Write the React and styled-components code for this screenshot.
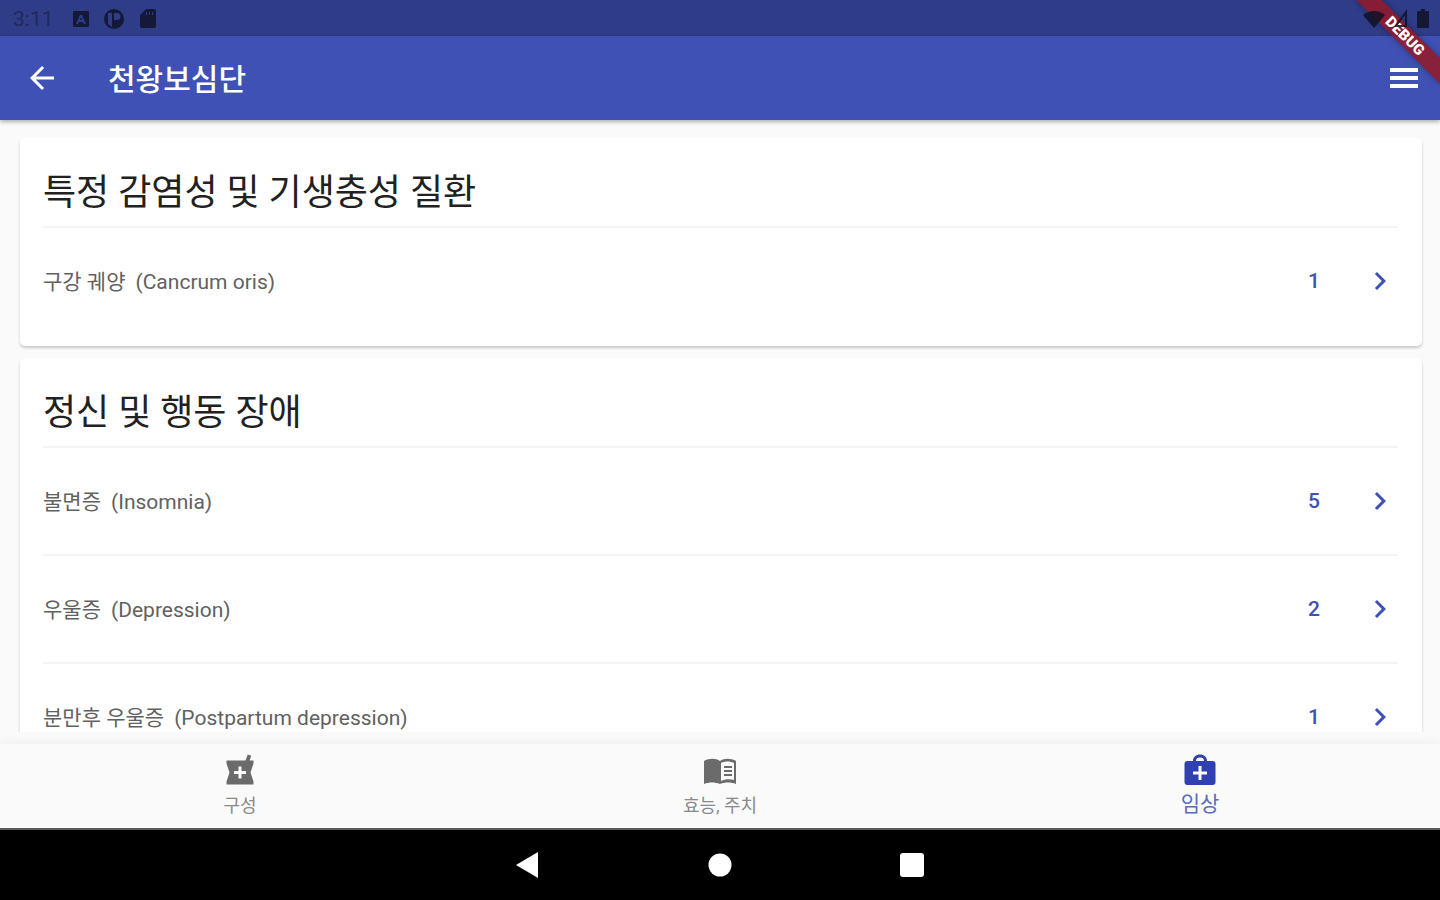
import React, { useState } from 'react';
import styled, { createGlobalStyle } from 'styled-components';
import { MdArrowBack, MdChevronRight, MdLocalPharmacy } from 'react-icons/md';

const sections = [
  {
    title: '특정 감염성 및 기생충성 질환',
    items: [{ name: '구강 궤양', english: 'Cancrum oris', count: 1 }],
  },
  {
    title: '정신 및 행동 장애',
    items: [
      { name: '불면증', english: 'Insomnia', count: 5 },
      { name: '우울증', english: 'Depression', count: 2 },
      { name: '분만후 우울증', english: 'Postpartum depression', count: 1 },
    ],
  },
];

const BookIcon = ({ size }) => (
  <svg width={size} height={size} viewBox="0 0 36 36" fill="currentColor" aria-hidden="true">
    <path
      fillRule="evenodd"
      d="M2 8c5-3 12-3 16 0 4-3 11-3 16 0v23c-5-2-11-2-16 0-5-2-11-2-16 0zm17 2v18c4-2 9-2 13-1V10c-4-2-9-2-13 0z"
    />
    <path d="M22 13h8v2h-8zm0 4h8v2h-8zm0 4h8v2h-8z" />
  </svg>
);

const MedkitIcon = ({ size }) => (
  <svg width={size} height={size} viewBox="0 0 36 36" fill="currentColor" aria-hidden="true">
    <path
      fillRule="evenodd"
      d="M11 8c0-4 3-6.500 7-6.500s7 2.500 7 6.500h5.500a3 3 0 0 1 3 3v18a3 3 0 0 1-3 3h-25a3 3 0 0 1-3-3V11a3 3 0 0 1 3-3zm3 0h8c0-2.500-1.500-3.500-4-3.500S14 5.500 14 8zm2.500 5v5.500H11v3h5.500V27h3v-5.500H25v-3h-5.500V13z"
    />
  </svg>
);

const tabs = [
  { id: 'composition', label: '구성', Icon: MdLocalPharmacy },
  { id: 'effects', label: '효능, 주치', Icon: BookIcon },
  { id: 'clinical', label: '임상', Icon: MedkitIcon },
];

const App = () => {
  const [activeTab, setActiveTab] = useState('clinical');

  return (
    <Screen>
      <GlobalStyle />
      <StatusBar>
        <StatusGroup>
          <Clock>3:11</Clock>
          <svg width="16" height="16" viewBox="0 0 16 16" aria-hidden="true">
            <path fillRule="evenodd" d="M1 0h14a1 1 0 0 1 1 1v14a1 1 0 0 1-1 1H1a1 1 0 0 1-1-1V1a1 1 0 0 1 1-1zm6 4-4 9h2l1-2h4l1 2h2L9 4zm1 2 1 3H7z" />
          </svg>
          <svg width="22" height="22" viewBox="0 0 22 22" aria-hidden="true">
            <path fillRule="evenodd" d="M11 1a10 10 0 1 1 0 20 10 10 0 0 1 0-20zM5 5v11l4 3V5zm6 0v7h3a3.500 3.500 0 0 0 0-7z" />
          </svg>
          <svg width="18" height="20" viewBox="0 0 18 20" aria-hidden="true">
            <path fillRule="evenodd" d="M7 0h8a2 2 0 0 1 2 2v15a2 2 0 0 1-2 2H3a2 2 0 0 1-2-2V6zm0 3v3h1V3zm3 0v3h1V3zm3 0v3h1V3z" />
          </svg>
        </StatusGroup>
        <StatusIcons>
          <svg width="22" height="20" viewBox="0 0 22 20" aria-hidden="true">
            <path d="M0 6a17 17 0 0 1 22 0L11 19z" />
          </svg>
          <svg width="14" height="20" viewBox="0 0 14 20" aria-hidden="true">
            <path d="M12 3v14H2z" fill="none" stroke="currentColor" strokeWidth="2" />
          </svg>
          <svg width="12" height="20" viewBox="0 0 12 20" aria-hidden="true">
            <path d="M4 0h4v2h3a1 1 0 0 1 1 1v15a1 1 0 0 1-1 1H1a1 1 0 0 1-1-1V3a1 1 0 0 1 1-1h3z" />
          </svg>
        </StatusIcons>
      </StatusBar>

      <AppBar>
        <IconButton type="button" aria-label="Back">
          <MdArrowBack size={36} />
        </IconButton>
        <Title>천왕보심단</Title>
        <IconButton type="button" aria-label="Menu">
          <svg width="36" height="36" viewBox="0 0 36 36">
            <path d="M4 8h28v4H4zm0 8h28v4H4zm0 8h28v4H4z" />
          </svg>
        </IconButton>
      </AppBar>

      <Content>
        {sections.map((section) => (
          <Card key={section.title}>
            <CardTitle>{section.title}</CardTitle>
            <List>
              {section.items.map((item) => (
                <Item key={item.name}>
                  <ItemLink href="#">
                    <Name>{item.name}</Name>
                    <English>({item.english})</English>
                    <Count>{item.count}</Count>
                    <MdChevronRight size={36} />
                  </ItemLink>
                </Item>
              ))}
            </List>
          </Card>
        ))}
      </Content>

      <BottomNav>
        {tabs.map(({ id, label, Icon }) => (
          <Tab key={id} type="button" $active={id === activeTab} onClick={() => setActiveTab(id)}>
            <Icon size={36} />
            <TabLabel $active={id === activeTab}>{label}</TabLabel>
          </Tab>
        ))}
      </BottomNav>

      <SystemNav>
        <SystemButton type="button" aria-label="Back">
          <svg width="24" height="26" viewBox="0 0 24 26"><path d="M0 13 22 0v26z" /></svg>
        </SystemButton>
        <SystemButton type="button" aria-label="Home">
          <svg width="24" height="24" viewBox="0 0 24 24"><circle cx="12" cy="12" r="11.5" /></svg>
        </SystemButton>
        <SystemButton type="button" aria-label="Overview">
          <svg width="24" height="24" viewBox="0 0 24 24"><rect width="24" height="24" rx="3" /></svg>
        </SystemButton>
      </SystemNav>

      <DebugBanner>DEBUG</DebugBanner>
    </Screen>
  );
};

const GlobalStyle = createGlobalStyle`
  * {
    box-sizing: border-box;
  }

  body {
    margin: 0;
    font-family: Roboto, "Noto Sans CJK KR", sans-serif;
    background: #fafafa;
  }

  button {
    border: none;
    padding: 0;
    background: none;
    color: inherit;
    font: inherit;
    cursor: pointer;
  }
`;

const Screen = styled.div`
  position: relative;
  display: flex;
  flex-direction: column;
  height: 100vh;
  overflow: hidden;
`;

const StatusBar = styled.div`
  display: flex;
  align-items: center;
  justify-content: space-between;
  flex: none;
  height: 36px;
  padding: 2px 11px 0 13px;
  background: #2f3c87;
  color: #131936;

  svg {
    fill: currentColor;
  }
`;

const StatusGroup = styled.div`
  display: flex;
  align-items: center;
  gap: 14px;
`;

// Stays above the debug ribbon
const StatusIcons = styled.div`
  position: relative;
  z-index: 3;
  display: flex;
  align-items: center;
  gap: 9px;
  color: rgba(14, 18, 38, 0.85);
`;

const Clock = styled.time`
  width: 46px;
  font-size: 21px;
  line-height: 24px;
  color: #1f2960;
`;

const AppBar = styled.header`
  position: relative;
  z-index: 1;
  display: flex;
  align-items: center;
  flex: none;
  height: 84px;
  padding: 0 18px 0 24px;
  background: #3f51b5;
  color: #fff;
  box-shadow: 0 2px 4px rgba(0, 0, 0, 0.3);
`;

const IconButton = styled.button`
  display: flex;

  svg {
    fill: currentColor;
  }
`;

const Title = styled.h1`
  flex: 1;
  margin: 0;
  padding: 4px 0 0 48px;
  font-size: 30px;
  line-height: 36px;
  font-weight: 500;
`;

const Content = styled.main`
  display: flex;
  flex-direction: column;
  gap: 12px;
  flex: 1;
  min-height: 0;
  margin-bottom: 12px;
  padding: 18px 18px 0 20px;
  overflow: hidden;
`;

const Card = styled.section`
  flex: none;
  padding: 0 24px 12px 23px;
  border-radius: 5px;
  background: #fff;
  box-shadow: 0 2px 3px rgba(0, 0, 0, 0.2);
`;

const CardTitle = styled.h2`
  margin: 0;
  padding: 31px 0 9px;
  font-size: 36px;
  line-height: 48px;
  font-weight: 400;
  color: #212121;
`;

const List = styled.ul`
  margin: 0;
  padding: 0;
  list-style: none;
`;

const Item = styled.li`
  border-top: 2px solid #f4f4f4;
`;

const ItemLink = styled.a`
  display: flex;
  align-items: center;
  height: 106px;
  font-size: 21px;
  line-height: 24px;
  color: #3f51b5;
  text-decoration: none;
`;

const Name = styled.span`
  padding-top: 2px;
  color: #616161;
`;

const English = styled.span`
  flex: 1;
  padding: 2px 0 0 10px;
  color: #616161;
`;

const Count = styled.span`
  width: 24px;
  margin-right: 36px;
  font-weight: 500;
  text-align: center;
`;

const BottomNav = styled.nav`
  display: grid;
  grid-template-columns: repeat(3, 1fr);
  flex: none;
  height: 84px;
  background: #fafafa;
  box-shadow: 0 0 12px rgba(0, 0, 0, 0.06);
`;

const Tab = styled.button`
  display: flex;
  flex-direction: column;
  align-items: center;
  padding-top: 9px;
  color: ${({ $active }) => ($active ? '#3040b0' : '#6b6b6b')};
`;

const TabLabel = styled.span`
  padding-top: ${({ $active }) => ($active ? '2px' : '4px')};
  font-size: ${({ $active }) => ($active ? '21px' : '18px')};
  line-height: 26px;
  color: ${({ $active }) => ($active ? '#5c6bc0' : '#8a8a8a')};
`;

const SystemNav = styled.div`
  display: grid;
  grid-template-columns: repeat(3, 192px);
  justify-content: center;
  flex: none;
  height: 72px;
  border-top: 2px solid #5a5a5a;
  background: #000;
`;

const SystemButton = styled.button`
  display: flex;
  align-items: center;
  justify-content: center;

  svg {
    fill: #fff;
  }
`;

// Diagonal ribbon over the top right corner
const DebugBanner = styled.div`
  position: absolute;
  top: 27px;
  right: -25px;
  z-index: 2;
  width: 120px;
  height: 18px;
  background: rgba(150, 24, 36, 0.84);
  color: #fff;
  font-size: 15px;
  line-height: 18px;
  font-weight: 900;
  text-align: center;
  transform: rotate(45deg);
  box-shadow: 0 0 6px rgba(0, 0, 0, 0.3);
`;

export default App;
